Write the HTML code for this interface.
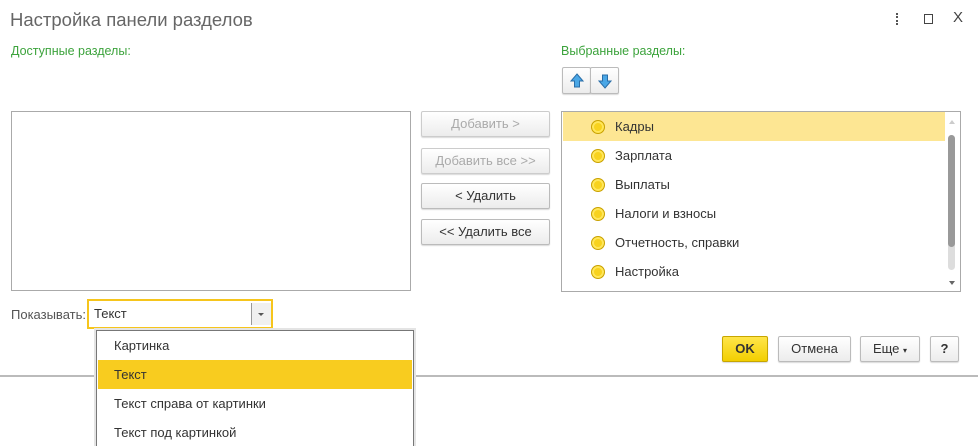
<!DOCTYPE html>
<html style="overflow:hidden"><head><meta charset="utf-8"><style>
*{box-sizing:border-box;margin:0;padding:0}
html,body{width:978px;height:446px;overflow:hidden}
body{background:#fff;font-family:"Liberation Sans","Noto Sans CJK SC",sans-serif;font-size:13px;color:#333;position:relative}
.a{position:absolute}
.title{left:10px;top:9px;font-size:18.5px;color:#666}
.lbl{color:#3ca33c;font-size:12.5px;top:44px}
.btn{position:absolute;border:1px solid #bbb;border-radius:2px;background:linear-gradient(#fff,#ececec);box-shadow:0 1px 1px rgba(0,0,0,.15);text-align:center;font-size:13px;color:#333;line-height:24px}
.dis{color:#aaa;border-color:#ccc}
.row{position:absolute;left:1px;width:382px;height:29px;line-height:29px}
.dot{position:absolute;left:28px;top:8px;width:14px;height:14px;border-radius:50%;background:#f8d21e;border:1px solid #c9a100;box-shadow:inset 0 0 0 2px #ffe65a}
.row span{position:absolute;left:52px}
.dd{position:absolute;left:1px;width:314px;height:29px;line-height:29px;padding-left:16px}
</style></head><body>
<div class="a title">Настройка панели разделов</div>
<div class="a" style="left:896px;top:13px;width:2px;height:12px;border-left:2px dotted #555"></div>
<div class="a" style="left:924px;top:14px;width:9px;height:10px;border:1.5px solid #444"></div>
<div class="a" style="left:953px;top:9px;font-size:15px;color:#444">X</div>
<div class="a lbl" style="left:11px">Доступные разделы:</div>
<div class="a lbl" style="left:561px">Выбранные разделы:</div>
<div class="btn" style="left:562px;top:67px;width:29px;height:27px">
<svg width="14" height="16" viewBox="0 0 14 16" style="margin-top:5px"><path d="M7 1L13 8H9.5V14H4.5V8H1Z" fill="#4aa7e6" stroke="#2a6ea8"/></svg></div>
<div class="btn" style="left:590px;top:67px;width:29px;height:27px">
<svg width="14" height="16" viewBox="0 0 14 16" style="margin-top:5px"><path d="M7 15L13 8H9.5V2H4.5V8H1Z" fill="#4aa7e6" stroke="#2a6ea8"/></svg></div>
<div class="a" style="left:11px;top:111px;width:400px;height:180px;border:1px solid #aaa"></div>
<div class="btn dis" style="left:421px;top:111px;width:129px;height:26px">Добавить &gt;</div>
<div class="btn dis" style="left:421px;top:148px;width:129px;height:26px">Добавить все &gt;&gt;</div>
<div class="btn" style="left:421px;top:183px;width:129px;height:26px">&lt; Удалить</div>
<div class="btn" style="left:421px;top:219px;width:129px;height:26px">&lt;&lt; Удалить все</div>
<div class="a" style="left:561px;top:111px;width:400px;height:181px;border:1px solid #aaa">
<div class="row" style="top:0;background:#fde693;"><div class="dot"></div><span>Кадры</span></div>
<div class="row" style="top:29px"><div class="dot"></div><span>Зарплата</span></div>
<div class="row" style="top:58px"><div class="dot"></div><span>Выплаты</span></div>
<div class="row" style="top:87px"><div class="dot"></div><span>Налоги и взносы</span></div>
<div class="row" style="top:116px"><div class="dot"></div><span>Отчетность, справки</span></div>
<div class="row" style="top:145px"><div class="dot"></div><span>Настройка</span></div>
<div class="a" style="left:386px;top:23px;width:7px;height:135px;border-radius:4px;background:#ddd"></div>
<div class="a" style="left:386px;top:23px;width:7px;height:112px;border-radius:4px;background:#999"></div>
<div class="a" style="left:387px;top:8px;border:3px solid transparent;border-bottom:4px solid #ccc;border-top:0"></div>
<div class="a" style="left:387px;top:169px;border:3px solid transparent;border-top:4px solid #666;border-bottom:0"></div>
</div>
<div class="a" style="left:11px;top:307px;color:#555">Показывать:</div>
<div class="a" style="left:87px;top:299px;width:186px;height:30px;border:2px solid #f6c51c;background:#fff">
<div class="a" style="left:5px;top:5px;color:#333">Текст</div>
<div class="a" style="left:162px;top:2px;width:20px;height:22px;border-left:1px solid #999;background:#f0f0f0"></div>
<div class="a" style="left:169px;top:12px;border:3px solid transparent;border-top:3px solid #555;border-bottom:0"></div>
</div>
<div class="a" style="left:0;top:375px;width:978px;height:2px;background:#bbb"></div>
<div class="btn" style="left:722px;top:336px;width:46px;height:26px;background:linear-gradient(#ffe54a,#f2cf00);border-color:#c7a600;font-weight:bold;color:#333">OK</div>
<div class="btn" style="left:778px;top:336px;width:73px;height:26px">Отмена</div>
<div class="btn" style="left:860px;top:336px;width:60px;height:26px">Еще <span style="font-size:8px">▾</span></div>
<div class="btn" style="left:930px;top:336px;width:29px;height:26px;font-weight:bold">?</div>
<div class="a" style="left:94px;top:328px;width:322px;height:118px;background:#e4e4e4;overflow:hidden">
<div class="a" style="left:2px;top:2px;width:318px;height:130px;background:#fff;border:1px solid #777">
<div class="dd" style="top:0">Картинка</div>
<div class="dd" style="top:29px;background:#f8cc1f">Текст</div>
<div class="dd" style="top:58px">Текст справа от картинки</div>
<div class="dd" style="top:87px">Текст под картинкой</div>
</div></div>
</body></html>
